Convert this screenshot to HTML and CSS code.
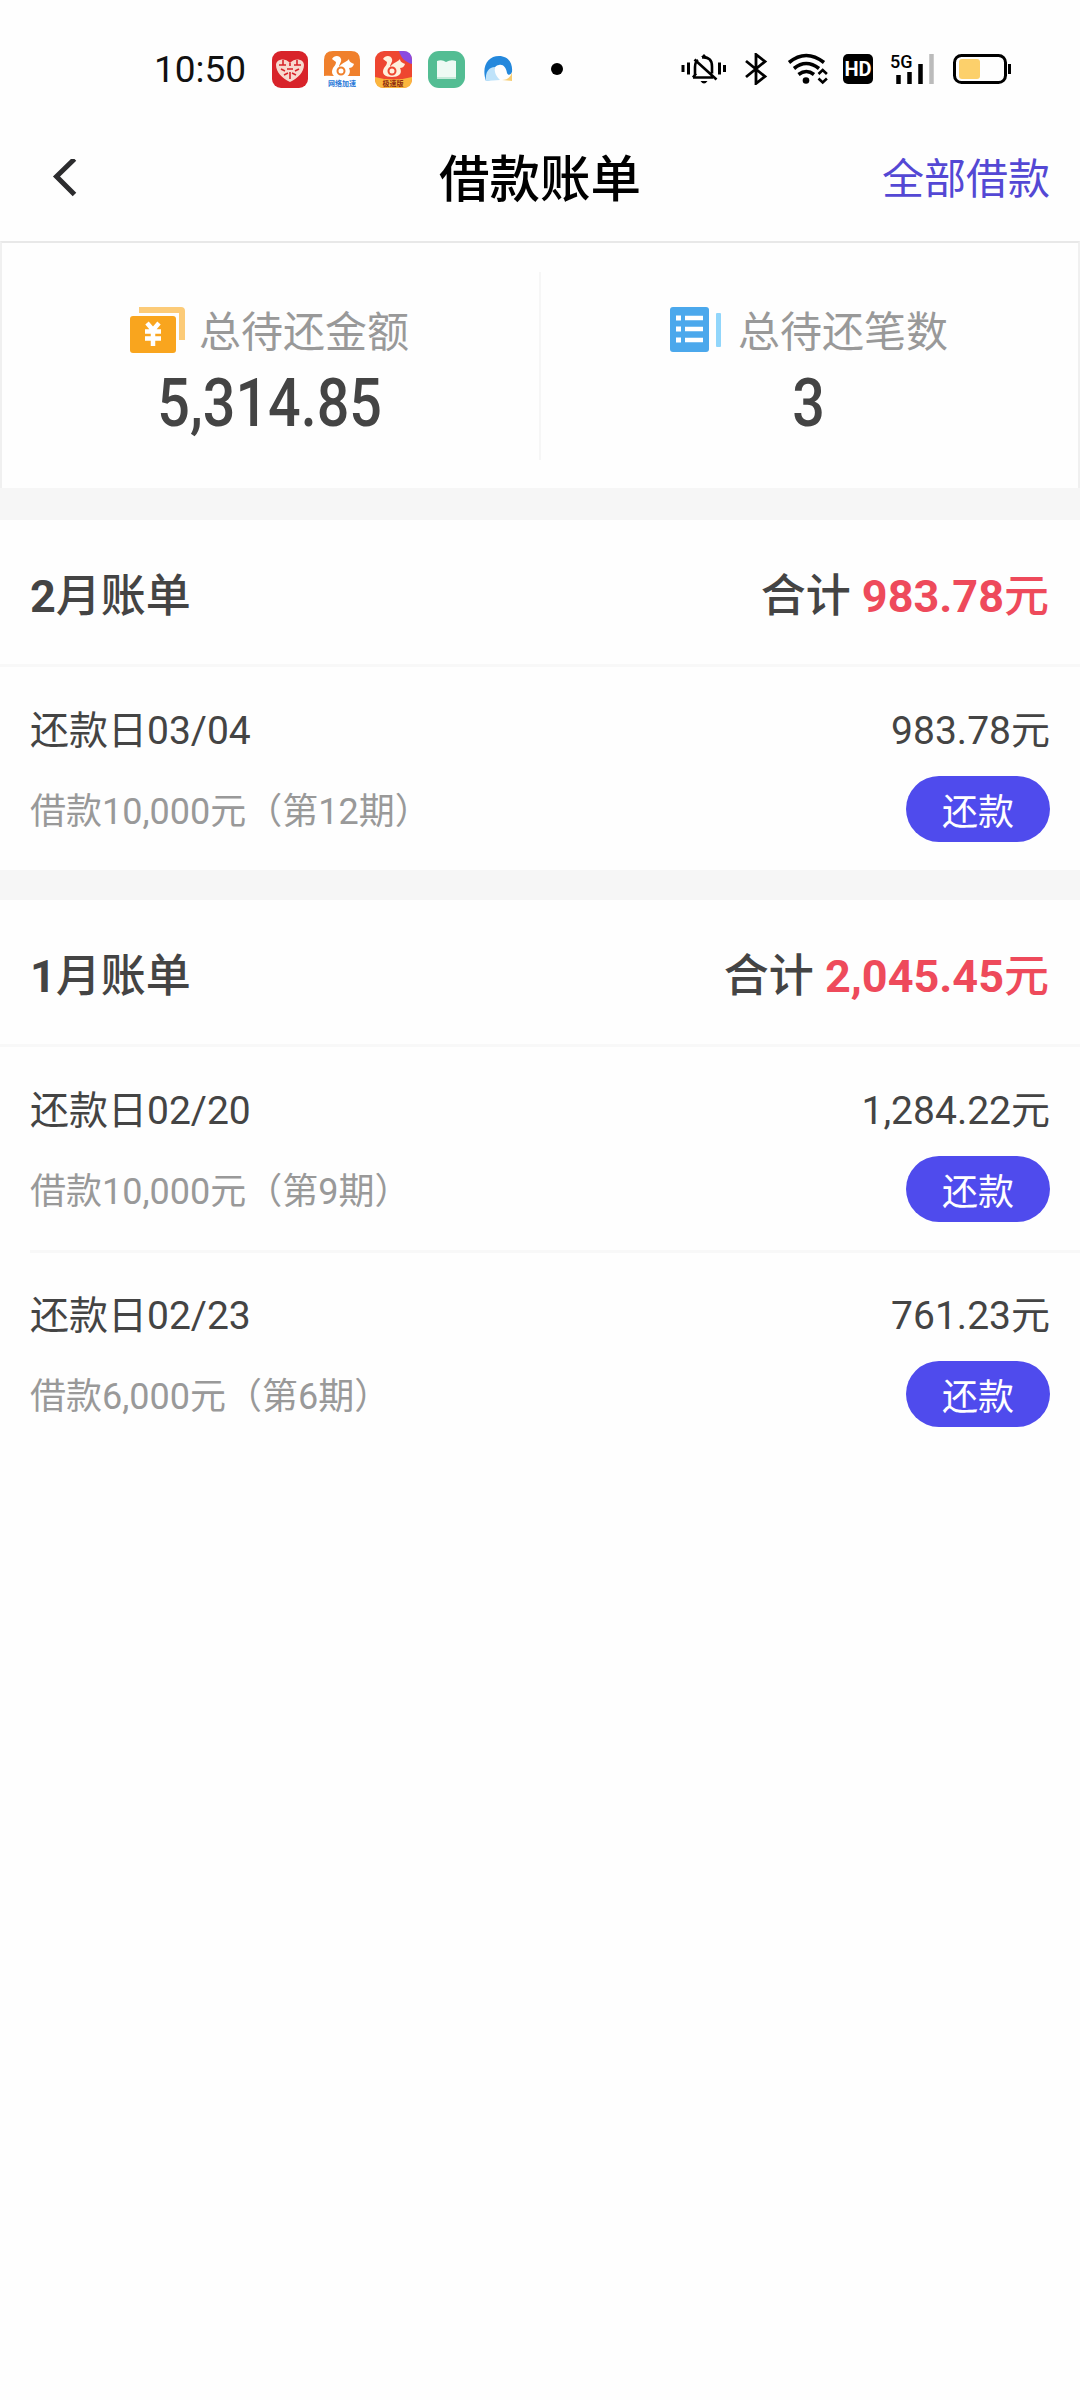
FILE: index.html
```html
<!DOCTYPE html>
<html lang="zh-CN">
<head>
    <meta charset="UTF-8">
    <meta name="viewport" content="width=device-width, initial-scale=1.0">
    <title>借款账单</title>
    <link rel="stylesheet" href="styles.css">
</head>
<body>
    <div class="status-bar">
        <span class="time">10:50</span>
        <div class="app-icons">
            <svg width="36" height="37" viewBox="0 0 36 37">
                <rect width="36" height="37" rx="9" fill="#d8232a"/>
                <path d="M18 31C10 27 4 21 4 14c0-6 9-8 14-2 5-6 14-4 14 2 0 7-6 13-14 17z" fill="#f7d9cf"/>
                <path d="M18 12v3M11 9v5M7 14h7M25 9v5M22 14h7M15 18h6M9 18l4 2M27 18l-4 2M12 24l4-2M24 24l-4-2M18 21v7" fill="none" stroke="#d8232a" stroke-width="1.600"/>
            </svg>
            <svg width="36" height="37" viewBox="0 0 36 37">
                <path d="M0 25V9q0-9 9-9h18q9 0 9 9v16z" fill="#f0802c"/>
                <path d="M8 8c2-4 8-4 9 0 1 3-2 5-2 8 4-5 8-5 10-8 0 3 3 4 5 5-1 3-3 4-5 4 3 6-2 10-8 10-7 0-11-4-8-10 1-2 3-3 3-6z" fill="#fff"/>
                <circle cx="17" cy="20" r="3.5" fill="none" stroke="#f0802c" stroke-width="2"/>
                <path d="M0 25c11-2 24 5 36 0v3q0 9-9 9H9q-9 0-9-9z" fill="#fff"/>
                <text x="18" y="35" class="app-tag" fill="#2a78d8">网络加速</text>
            </svg>
            <svg width="37" height="37" viewBox="0 0 37 37">
                <rect width="37" height="37" rx="9" fill="#ee4630"/>
                <path d="M8 8c2-4 8-4 9 0 1 3-2 5-2 8 4-5 8-5 10-8 0 3 3 4 5 5-1 3-3 4-5 4 3 6-2 9-8 9-7 0-11-3-8-9 1-2 3-3 3-6z" fill="#fff0dc"/>
                <circle cx="17" cy="20" r="3.5" fill="none" stroke="#ee4630" stroke-width="2"/>
                <path d="M0 26q18 5 37 0v2q0 9-9 9H9q-9 0-9-9z" fill="#fbb63e"/>
                <text x="18" y="34.5" class="app-tag" fill="#8d2a10">极速版</text>
                <path d="M24 0h4q9 0 9 9v4C30 11 26 7 24 0z" fill="#8a4be0"/>
            </svg>
            <svg width="37" height="37" viewBox="0 0 37 37">
                <rect width="37" height="37" rx="11" fill="#53bd93"/>
                <path d="M9 10q5-2 9 1 5-3 10-1v17H9z" fill="#eefaf4"/>
                <path d="M9 27h19" stroke="#c4ead9" stroke-width="2"/>
            </svg>
            <svg width="37" height="37" viewBox="0 0 37 37">
                <path d="M6 30C1 15 8 5 19 5c9 0 14 7 13 16-1 3-4 4-5 1-1-6-4-9-8-8-6 1-6 7-4 14z" fill="#2488dc"/>
                <path d="M6 30c-1-9 3-14 9-14-1 5 1 9 5 13z" fill="#bfe3fa"/>
                <path d="M22 29c5 0 9-3 10-8v9z" fill="#f7cd72"/>
            </svg>
        </div>
        <span class="dot"></span>
        <div class="system-icons">
            <svg class="bell" width="46" height="32" viewBox="0 0 46 32">
                <path d="M2 12v7M7.500 9.500v12M38.500 9.500v12M43.500 12v7" stroke="#000" stroke-width="3"/>
                <path d="M12 24.500h20M14 22V14q0-5 3-7M21 4.500q10-1 10 9v7M12 24.500l3-4M13.500 6.500l22 20" fill="none" stroke="#000" stroke-width="2.600"/>
                <path d="M20 4h6l-3-3zM19.500 28h7q-3.500 5-7 0z"/>
            </svg>
            <svg class="bluetooth" width="24" height="32" viewBox="0 0 24 32">
                <path d="M2 8l19 15.500-9 7V1.500l9 7L2 24" fill="none" stroke="#000" stroke-width="2.800"/>
            </svg>
            <svg class="wifi" width="42" height="32" viewBox="0 0 42 32">
                <path d="M2 9.500q17-14 35 0M7 15.500q12-10 25 0M11.500 21.500q8-6 15.500 0" fill="none" stroke="#000" stroke-width="3.600"/>
                <circle cx="19" cy="27.500" r="3.300"/>
                <path d="M31.500 21l4.200-4 4.200 4M31.500 25.500l4.200 4 4.200-4" fill="none" stroke="#000" stroke-width="2.600"/>
            </svg>
            <svg class="hd" width="30" height="30" viewBox="0 0 30 30">
                <rect width="30" height="30" rx="5"/>
                <text x="15" y="22" class="hd-text">HD</text>
            </svg>
            <svg class="signal" width="46" height="42" viewBox="0 -5 46 42">
                <text x="0" y="15" class="net-text">5G</text>
                <path d="M8.500 22v9M19.500 19v12M30.500 11v20" stroke="#000" stroke-width="4.500"/>
                <path d="M41.500 1v30" stroke="#bbb" stroke-width="4.500"/>
            </svg>
            <svg class="battery" width="59" height="30" viewBox="0 0 59 30">
                <rect x="1.500" y="1.500" width="51" height="27" rx="7" fill="none" stroke="#000" stroke-width="3"/>
                <rect x="6" y="5" width="21" height="20" rx="3" fill="#fcd06b"/>
                <path d="M56.500 10v10" stroke="#000" stroke-width="3"/>
            </svg>
        </div>
    </div>

    <div class="nav">
        <svg class="back" width="26" height="42" viewBox="0 0 26 42">
            <path d="M22.500 0L4.500 17.500l18 18" fill="none" stroke="#2c2c2e" stroke-width="5"/>
        </svg>
        <h1>借款账单</h1>
        <a class="all-loans">全部借款</a>
    </div>

    <div class="summary">
        <div class="summary-item">
            <div class="summary-label">
                <svg width="56" height="46" viewBox="0 0 56 46">
                    <path d="M9 0h42q4 0 4 4v29h-6V6H9z" fill="#fccb78"/>
                    <rect y="9" width="46" height="37" rx="3" fill="#f9a51e"/>
                    <path d="M17 16l6 7 6-7M23 22v17M15 24.500h16M15 31.500h16" fill="none" stroke="#fff" stroke-width="4.500"/>
                </svg>
                <span>总待还金额</span>
            </div>
            <div class="summary-value">5,314.85</div>
        </div>
        <div class="summary-item">
            <div class="summary-label">
                <svg width="56" height="46" viewBox="0 0 56 46">
                    <rect x="1" width="39" height="45" rx="3" fill="#4ba8ec"/>
                    <path d="M16 11h18M16 22h18M16 33h18" stroke="#fff" stroke-width="4.500"/>
                    <path d="M7 11h5M7 22h5M7 33h5" stroke="#fff" stroke-width="5"/>
                    <rect x="47" y="6" width="5" height="34" rx="1" fill="#91d6fb"/>
                </svg>
                <span>总待还笔数</span>
            </div>
            <div class="summary-value">3</div>
        </div>
    </div>

    <div class="bill">
        <div class="bill-header">
            <h2><b>2</b>月账单</h2>
            <div class="total">合计 <span><b>983.78</b>元</span></div>
        </div>
        <div class="bill-item">
            <div class="row main">
                <span>还款日03/04</span>
                <span>983.78元</span>
            </div>
            <div class="row">
                <span class="desc">借款10,000元（第12期）</span>
                <button class="repay">还款</button>
            </div>
        </div>
    </div>

    <div class="bill">
        <div class="bill-header">
            <h2><b>1</b>月账单</h2>
            <div class="total">合计 <span><b>2,045.45</b>元</span></div>
        </div>
        <div class="bill-item">
            <div class="row main">
                <span>还款日02/20</span>
                <span>1,284.22元</span>
            </div>
            <div class="row">
                <span class="desc">借款10,000元（第9期）</span>
                <button class="repay">还款</button>
            </div>
        </div>
        <div class="bill-item">
            <div class="row main">
                <span>还款日02/23</span>
                <span>761.23元</span>
            </div>
            <div class="row">
                <span class="desc">借款6,000元（第6期）</span>
                <button class="repay">还款</button>
            </div>
        </div>
    </div>
</body>
</html>
```
FILE: styles.css
```css
* {
    box-sizing: border-box;
}

body {
    margin: 0;
    min-height: 100vh;
    background: #fefefe;
    color: #444;
    font-family: Roboto, "Noto Sans CJK SC", sans-serif;
}

h1, h2 {
    margin: 0;
}

svg {
    display: block;
    flex-shrink: 0;
}

/* status bar */
.status-bar {
    height: 138px;
    padding: 0 68px 0 154px;
    display: flex;
    align-items: center;
}

.time {
    width: 118px;
    font-size: 37px;
    color: #111;
}

.app-icons {
    display: flex;
    gap: 15.500px;
}

.app-tag {
    font-size: 7px;
    font-weight: bold;
    text-anchor: middle;
}

.dot {
    width: 12px;
    height: 12px;
    margin-left: 34px;
    border-radius: 50%;
    background: #000;
}

.system-icons {
    margin-left: auto;
    display: flex;
    align-items: center;
}

.bluetooth {
    margin-left: 17px;
}

.wifi {
    margin-left: 19px;
}

.hd {
    margin-left: 14px;
}

.signal {
    margin-left: 17px;
}

.battery {
    margin-left: 17px;
}

.hd-text {
    font-size: 20px;
    font-weight: bold;
    text-anchor: middle;
    fill: #fff;
}

.net-text {
    font-size: 18px;
    font-weight: 500;
}

/* title bar */
.nav {
    height: 103px;
    padding: 2px 30px 22px 52px;
    display: grid;
    grid-template-columns: 1fr auto 1fr;
    align-items: center;
}

.nav h1 {
    margin-left: -22px;
    font-size: 50.500px;
    line-height: 78px;
    font-weight: 500;
    color: #000;
}

.all-loans {
    justify-self: end;
    font-size: 42px;
    line-height: 78px;
    color: #5448d4;
}

.summary {
    height: 247px;
    display: flex;
    border: 2px solid #f0f0f0;
    border-top-color: #e8e8e8;
    border-bottom: none;
}

.summary-item {
    flex: 1;
    margin: 29px 0 28px;
    padding-top: 28px;
    text-align: center;
}

.summary-item + .summary-item {
    border-left: 2px solid #f6f6f6;
}

.summary-label {
    height: 60px;
    padding-right: 2px;
    display: flex;
    align-items: center;
    justify-content: center;
    gap: 13px;
    font-size: 42px;
    line-height: 60px;
    color: #999;
}

.summary-label span {
    padding-top: 6px;
}

.summary-value {
    padding: 4px 2px 0 0;
    font-size: 66px;
    line-height: 80px;
    font-weight: 500;
    transform: scaleX(0.87);
}

/* monthly bills */
.bill {
    border-top: 30px solid #f6f6f6;
}

.summary + .bill {
    border-top-width: 32px;
}

.bill-header {
    height: 147px;
    padding: 0 31px 0 30px;
    display: flex;
    justify-content: space-between;
    align-items: center;
    border-bottom: 3px solid #f8f8f8;
    font-size: 45px;
    font-weight: 500;
}

.bill-header h2 {
    font-size: 45px;
    font-weight: 500;
}

.total span {
    color: #ee4a5b;
}

.bill-item {
    margin-left: 30px;
    padding: 30px 30px 28px 0;
}

.bill-item + .bill-item {
    padding-top: 29px;
    border-top: 3px solid #f8f8f8;
}

.row {
    display: flex;
    justify-content: space-between;
    align-items: center;
}

.main {
    height: 60px;
    margin-bottom: 19px;
    font-size: 39px;
}

.desc {
    padding-top: 7px;
    font-size: 36px;
    line-height: 59px;
    color: #999;
}

.repay {
    width: 144px;
    height: 66px;
    padding: 0 0 1px;
    border: none;
    border-radius: 33px;
    background: #4f4bed;
    color: #fff;
    font-family: inherit;
    font-size: 36px;
}
```
